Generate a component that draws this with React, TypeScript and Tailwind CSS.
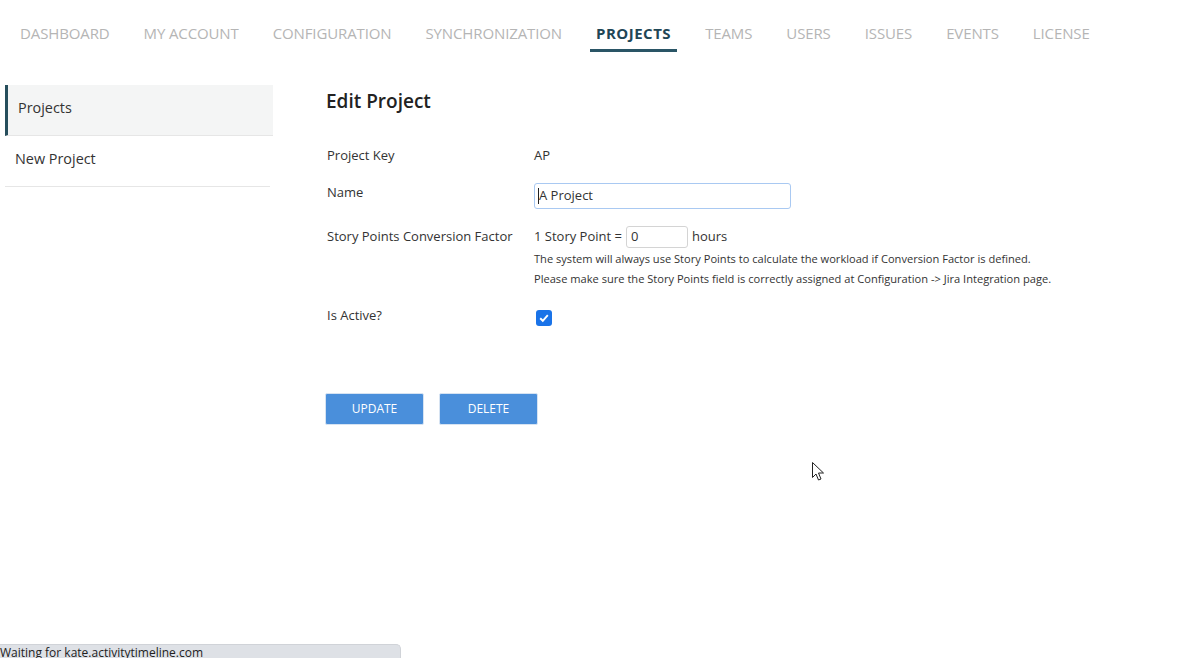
import React from "react";

const navItems = [
  "DASHBOARD",
  "MY ACCOUNT",
  "CONFIGURATION",
  "SYNCHRONIZATION",
  "PROJECTS",
  "TEAMS",
  "USERS",
  "ISSUES",
  "EVENTS",
  "LICENSE",
];

export default function App() {
  return (
    <div
      className="relative w-[1197px] h-[658px] bg-white overflow-hidden text-[#333]"
      style={{ fontFamily: '"Open Sans", "Noto Sans", sans-serif' }}
    >
      {/* Top nav */}
      <nav className="flex items-start pl-[14px] pt-[22px] gap-[22px]">
        {navItems.map((item) => {
          const active = item === "PROJECTS";
          return (
            <div
              key={item}
              className={
                "px-[6px] h-[30px] text-[15px] leading-[23px] " +
                (active
                  ? "font-bold tracking-[0.5px] text-[#1f4656] border-b-[3px] border-[#2a5566]"
                  : "tracking-[-0.12px] text-[#b5b5b5]")
              }
            >
              {item}
            </div>
          );
        })}
      </nav>

      <div className="flex mt-[33px]">
        {/* Sidebar */}
        <aside className="w-[268px] ml-[5px] shrink-0">
          <div className="h-[51px] bg-[#f4f5f5] border-l-[3px] border-[#264e5c] border-b border-b-[#e6e6e6] flex items-center pl-[10px] pb-[4px] text-[14.4px] text-[#333]">
            Projects
          </div>
          <div className="h-[51px] w-[265px] border-b border-[#e6e6e6] flex items-center pl-[10px] pb-[4px] text-[14.4px] text-[#333]">
            New Project
          </div>
        </aside>

        {/* Main */}
        <main className="ml-[52px] pt-[2px]">
          <h1 className="text-[19px] font-semibold text-[#222] leading-[28px] pl-[1px]">
            Edit Project
          </h1>

          <div className="mt-[31px] pl-[2px] text-[13px] text-[#333]">
            <div className="flex h-[20px] items-center">
              <div className="w-[207px]">Project Key</div>
              <div>AP</div>
            </div>

            <div className="flex mt-[17px]">
              <div className="w-[207px] leading-[18px]">Name</div>
              <div className="w-[257px] h-[26px] border border-[#a9c9f2] rounded-[3px] flex items-center pl-[3px]">
                <span className="w-px h-[16px] bg-[#222]"></span>
                <span>A Project</span>
              </div>
            </div>

            <div className="flex mt-[17px]">
              <div className="w-[207px] leading-[20px]">Story Points Conversion Factor</div>
              <div>
                <div className="flex items-center">
                  <span>1 Story Point =</span>
                  <div className="ml-[4px] w-[62px] h-[22px] border border-[#d4d4d4] rounded-[3px] flex items-center pl-[4px]">
                    0
                  </div>
                  <span className="ml-[4px]">hours</span>
                </div>
                <div className="text-[11.1px] leading-[20px] mt-[1px] text-[#333]">
                  The system will always use Story Points to calculate the workload if Conversion Factor is defined.
                </div>
                <div className="text-[11.1px] leading-[20px] text-[#333]">
                  Please make sure the Story Points field is correctly assigned at Configuration -&gt; Jira Integration page.
                </div>
              </div>
            </div>

            <div className="flex mt-[17px]">
              <div className="w-[207px] leading-[18px]">Is Active?</div>
              <div className="mt-[4px] ml-[2px] w-[16px] h-[16px] rounded-[3px] bg-[#1a73e8] flex items-center justify-center">
                <svg width="12" height="12" viewBox="0 0 12 12">
                  <path d="M2.2 6.3 L4.8 8.8 L9.8 3.2" fill="none" stroke="white" strokeWidth="1.9" />
                </svg>
              </div>
            </div>
          </div>

          <div className="flex gap-[15px] mt-[67px]">
            <button className="w-[99px] h-[32px] bg-[#4a8fdb] border border-[#d6e3f2] rounded-[2px] text-white text-[12px]">
              UPDATE
            </button>
            <button className="w-[99px] h-[32px] bg-[#4a8fdb] border border-[#d6e3f2] rounded-[2px] text-white text-[12px]">
              DELETE
            </button>
          </div>
        </main>
      </div>

      {/* Mouse cursor */}
      <svg
        className="absolute left-[812px] top-[462px]"
        width="13"
        height="20"
        viewBox="0 0 13 20"
      >
        <path
          d="M0.5 0.5 L0.5 15.5 L4 12 L6.5 18 L9 17 L6.5 11 L11.5 11 Z"
          fill="white"
          stroke="#222"
          strokeWidth="1"
        />
      </svg>

      {/* Status bar */}
      <div className="absolute left-0 bottom-0 w-[401px] h-[14px] bg-[#dee1e6] rounded-tr-[5px] border-t border-r border-[#d0d3d8] overflow-hidden">
        <div className="text-[12px] leading-[16px] text-[#222] whitespace-nowrap">
          Waiting for kate.activitytimeline.com
        </div>
      </div>
    </div>
  );
}
